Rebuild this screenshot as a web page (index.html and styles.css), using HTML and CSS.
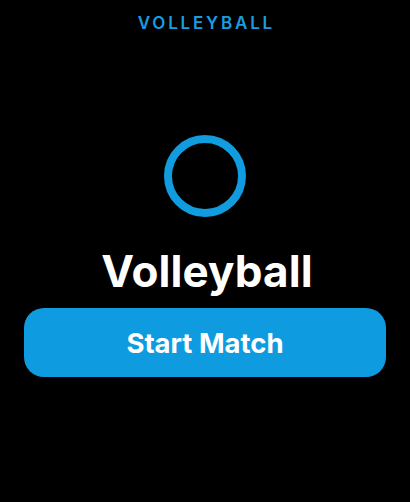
FILE: index.html
```html
<!DOCTYPE html>
<html>
<head>
<meta charset="utf-8">
<link rel="stylesheet" href="styles.css">
</head>
<body>
<div class="screen">
  <div class="header">VOLLEYBALL</div>
  <div class="ring"></div>
  <h1 class="title">Volleyball</h1>
  <button class="start">Start Match</button>
</div>
</body>
</html>
```
FILE: styles.css
```css
html, body {
  margin: 0;
  padding: 0;
  background: #000;
}
.screen {
  width: 410px;
  height: 502px;
  display: flex;
  flex-direction: column;
  align-items: center;
  font-family: Inter, "Noto Sans", sans-serif;
  color: #fff;
}
.header {
  margin-top: 13px;
  font-size: 17px;
  line-height: 20px;
  font-weight: 600;
  letter-spacing: 2.8px;
  padding-left: 2.8px;
  color: #1a9de0;
}
.ring {
  margin-top: 102px;
  width: 66px;
  height: 66px;
  border: 8px solid #129ce0;
  border-radius: 50%;
}
.title {
  margin: 28px 0 0;
  padding-left: 4px;
  font-size: 44px;
  line-height: 52px;
  font-weight: 700;
  letter-spacing: 0.1px;
}
.start {
  margin-top: 11px;
  width: 362px;
  height: 69px;
  border: none;
  border-radius: 20px;
  background: #0f9be0;
  color: #fff;
  font-family: Inter, "Noto Sans", sans-serif;
  font-size: 27.5px;
  font-weight: 700;
}
```
